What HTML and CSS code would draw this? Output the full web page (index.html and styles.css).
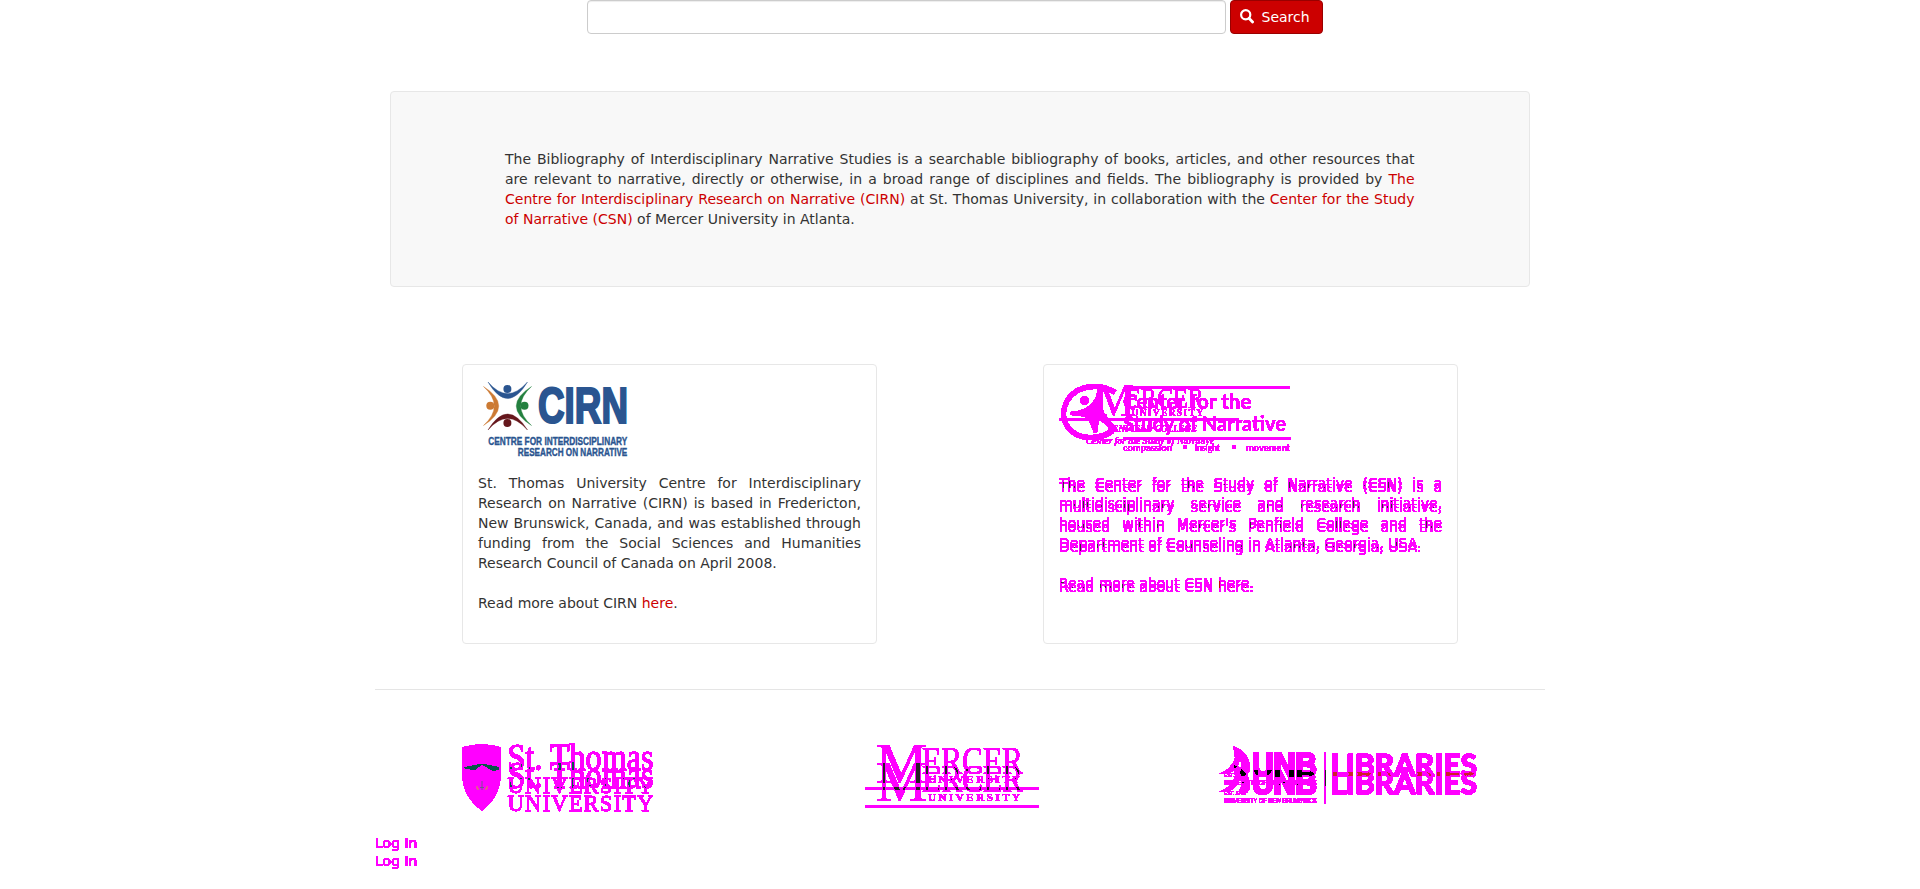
FILE: index.html
```html
<!DOCTYPE html>
<html lang="en">
<head>
<meta charset="utf-8">
<title>Bibliography of Interdisciplinary Narrative Studies</title>
<link rel="stylesheet" href="styles.css">
</head>
<body>
<svg class="defs" width="0" height="0" aria-hidden="true">
  <defs>
    <filter id="ghost4" x="-5%" y="-5%" width="110%" height="120%" color-interpolation-filters="sRGB">
      <feOffset in="SourceGraphic" dy="4" result="moved"/>
      <feComposite in="SourceGraphic" in2="moved" operator="xor"/>
      <feComponentTransfer result="mask"><feFuncA type="discrete" tableValues="0 1 1 1 1 1 1 1 1 1 1 1 1 1 1 1"/></feComponentTransfer>
      <feFlood flood-color="#ff00ff"/>
      <feComposite in2="mask" operator="in" result="paint"/>
      <feComposite in="SourceGraphic" in2="moved" operator="in" result="both"/>
      <feMerge><feMergeNode in="both"/><feMergeNode in="paint"/></feMerge>
    </filter>
    <filter id="ghost18" filterUnits="userSpaceOnUse" x="-5" y="-5" width="290" height="120" color-interpolation-filters="sRGB">
      <feOffset in="SourceGraphic" dy="18" result="moved"/>
      <feComposite in="SourceGraphic" in2="moved" operator="xor"/>
      <feComponentTransfer result="mask"><feFuncA type="discrete" tableValues="0 1 1 1 1 1 1 1 1 1 1 1 1 1 1 1"/></feComponentTransfer>
      <feFlood flood-color="#ff00ff"/>
      <feComposite in2="mask" operator="in" result="paint"/>
      <feComposite in="SourceGraphic" in2="moved" operator="in" result="both"/>
      <feMerge><feMergeNode in="both"/><feMergeNode in="paint"/></feMerge>
    </filter>
    <filter id="crisp" filterUnits="userSpaceOnUse" x="-5" y="-5" width="290" height="120" color-interpolation-filters="sRGB">
      <feComponentTransfer><feFuncA type="discrete" tableValues="0 1 1 1 1 1 1 1 1 1"/></feComponentTransfer>
    </filter>
  </defs>
</svg>
<div class="container">
  <form class="search">
    <input class="search-input" type="text" aria-label="Search">
    <button class="search-button" type="button">
      <svg width="14" height="15" viewBox="0 0 14 15"><circle cx="5.700" cy="5.800" r="4.600" fill="none" stroke="#fff" stroke-width="2.200"/><path d="M9 9.200l3.600 3.700" stroke="#fff" stroke-width="2.800" stroke-linecap="round"/></svg>
      <span>Search</span>
    </button>
  </form>
  <section class="intro">
    The Bibliography of Interdisciplinary Narrative Studies is a searchable bibliography of books, articles, and other resources that are relevant to narrative, directly or otherwise, in a broad range of disciplines and fields. The bibliography is provided by <a href="#">The Centre for Interdisciplinary Research on Narrative (CIRN)</a> at St. Thomas University, in collaboration with the <a href="#">Center for the Study of Narrative (CSN)</a> of Mercer University in Atlanta.
  </section>
  <div class="cards">
    <article class="card">
      <svg class="card-logo" width="160" height="80" viewBox="8 10 160 80">
        <path d="M18 12Q37.500 35 57.500 12Q37.500 45 18 12Z" fill="#2a5590" stroke="#2a5590" stroke-width=".4"/>
        <path d="M13.500 16.500Q35 36 13.500 55.500Q44 36 13.500 16.500Z" fill="#cc7a33" stroke="#cc7a33" stroke-width=".4"/>
        <path d="M61.500 16.500Q40 36 61.500 55.500Q31 36 61.500 16.500Z" fill="#24803f" stroke="#24803f" stroke-width=".4"/>
        <path d="M18 60Q37.500 37 57.500 60Q37.500 28 18 60Z" fill="#65171c" stroke="#65171c" stroke-width=".4"/>
        <circle cx="37.400" cy="19" r="4" fill="#2a5590"/><circle cx="20.300" cy="35.700" r="4" fill="#cc7a33"/>
        <circle cx="54.500" cy="35.700" r="4" fill="#24803f"/><circle cx="37.400" cy="53" r="4" fill="#65171c"/>
        <g class="sans" fill="#2a5590" stroke="#2a5590">
          <text x="68" y="52.800" font-size="50" stroke-width="2.200" textLength="90" lengthAdjust="spacingAndGlyphs">CIRN</text>
          <text x="18.300" y="74.500" font-size="11.500" stroke-width=".4" textLength="139" lengthAdjust="spacingAndGlyphs">CENTRE FOR INTERDISCIPLINARY</text>
          <text x="47.800" y="85.700" font-size="11.500" stroke-width=".4" textLength="109.500" lengthAdjust="spacingAndGlyphs">RESEARCH ON NARRATIVE</text>
        </g>
      </svg>
      <p>St. Thomas University Centre for Interdisciplinary Research on Narrative (CIRN) is based in Fredericton, New Brunswick, Canada, and was established through funding from the Social Sciences and Humanities Research Council of Canada on April 2008.</p>
      <p>Read more about CIRN <a href="#">here</a>.</p>
    </article>
    <article class="card">
      <svg class="card-logo" width="240" height="80" viewBox="9 5 240 80">
        <g filter="url(#crisp)" fill="#f0f">
          <path d="M65 17.500C51 8 27 9 17 26C6 48 24 66 46 62Q56 61 62 56" fill="none" stroke="#f0f" stroke-width="5"/>
          <circle cx="34.500" cy="25.500" r="4"/>
          <path d="M20 37Q39 36 46 22L48 12L53 18Q51 31 54 38L68 55L64 57L49 44L47 58H44L38 43Q30 40 20 40Z"/>
          <path d="M80 11H240V14H80ZM9 43.300H188.500V46H9ZM73 62H241V64.700H73Z"/>
          <g class="serif">
            <text x="46" y="41.300" font-size="46" textLength="38" lengthAdjust="spacingAndGlyphs">M</text>
            <text x="76" y="32.500" font-size="30" textLength="78" lengthAdjust="spacingAndGlyphs">ERCER</text>
            <text x="81.500" y="40.500" font-size="9.500" font-weight="700" textLength="71.500">UNIVERSITY</text>
            <text x="57" y="56.500" font-size="10" font-weight="700" font-style="italic" textLength="90" lengthAdjust="spacingAndGlyphs">PENFIELD COLLEGE</text>
            <text x="36" y="69" font-size="10.500" font-weight="700" font-style="italic" textLength="128" lengthAdjust="spacingAndGlyphs">Center for the Study of Narrative</text>
          </g>
          <g class="round">
            <text x="73" y="33.500" font-size="21" textLength="128.500" lengthAdjust="spacingAndGlyphs">Center for the</text>
            <text x="73" y="55.700" font-size="21" textLength="163" lengthAdjust="spacingAndGlyphs">Study of Narrative</text>
            <text x="73" y="75.500" font-size="9" textLength="49" lengthAdjust="spacingAndGlyphs">compassion</text>
            <text x="145" y="75.500" font-size="9" textLength="25" lengthAdjust="spacingAndGlyphs">insight</text>
            <text x="196" y="75.500" font-size="9" textLength="44" lengthAdjust="spacingAndGlyphs">movement</text>
          </g>
          <path d="M133 70h4v4h-4zM182 70h4v4h-4z"/>
        </g>
      </svg>
      <div class="ghosted">
        <p>The Center for the Study of Narrative (CSN) is a multidisciplinary service and research initiative, housed within Mercer's Penfield College and the Department of Counseling in Atlanta, Georgia, USA.</p>
        <p>Read more about CSN <a href="#">here</a>.</p>
      </div>
    </article>
  </div>
  <hr class="rule">
  <footer class="partners">
    <svg width="194" height="90" viewBox="0 0 194 90">
      <path d="M0 17Q20 11 39 17V46Q38 68 20 81Q1 68 0 46Z" fill="#f0f" shape-rendering="crispEdges"/>
      <path d="M2 37L17 34H23L37 37V40L31 41L20 35L13 40L3 39Z" fill="#075648" shape-rendering="crispEdges"/>
      <path d="M18 57.500h4M20 51v9" stroke="#56677a" stroke-width=".8"/><path d="M15 56v3h2M25 56v3h-2" stroke="#c9a13c" fill="none"/>
      <g filter="url(#ghost18)" class="serif" fill="#075648">
        <text x="45.500" y="39.500" font-size="37" stroke="#075648" stroke-width=".5" textLength="146" lengthAdjust="spacingAndGlyphs">St. Thomas</text>
        <text x="45.500" y="62.500" font-size="22.500" stroke="#075648" stroke-width=".3" textLength="146" lengthAdjust="spacing">UNIVERSITY</text>
      </g>
    </svg>
    <svg class="mercer" width="175" height="90" viewBox="0 0 175 90">
      <g filter="url(#ghost18)" class="serif" fill="#222">
        <text x="11" y="52.500" font-size="58" textLength="51" lengthAdjust="spacingAndGlyphs">M</text>
        <text x="57" y="43.500" font-size="39" textLength="101" lengthAdjust="spacingAndGlyphs">ERCER</text>
        <text x="63" y="53" font-size="11" font-weight="700" textLength="92">UNIVERSITY</text>
        <path d="M0 57H174V60H0Z"/>
      </g>
    </svg>
    <svg class="unb" width="260" height="90" viewBox="0 0 260 90">
      <g filter="url(#ghost18)">
        <path d="M14 16Q31 22 31 39Q30 45 23 47L20 43Q24 38 21 28Q20 38 11 43L0 44Q13 39 16 28Q16 22 14 16Z"/>
        <g class="sans">
          <text x="33" y="46" font-size="33" stroke="#000" stroke-width="1.800" textLength="65" lengthAdjust="spacingAndGlyphs">UNB</text>
          <text x="5" y="47" font-size="6" textLength="22" lengthAdjust="spacingAndGlyphs">EST. 1785</text>
          <text x="5" y="55" font-size="6.500" textLength="93" lengthAdjust="spacingAndGlyphs">UNIVERSITY OF NEW BRUNSWICK</text>
        </g>
        <path d="M105.500 22H107V56H105.500Z" fill="#222"/>
        <text class="round" x="111.500" y="46" font-size="31" fill="#ce2028" stroke="#ce2028" stroke-width="1" textLength="146.500" lengthAdjust="spacingAndGlyphs">LIBRARIES</text>
      </g>
    </svg>
  </footer>
  <svg class="login" width="60" height="50" viewBox="0 0 60 50">
    <g filter="url(#ghost18)"><text x="0" y="15" font-size="14" fill="#c00">Log In</text></g>
  </svg>
</div>
</body>
</html>
```
FILE: styles.css
```css
* { box-sizing: border-box; }

body {
  margin: 0;
  background: #fff;
  color: #333;
  font: 14px/20px "DejaVu Sans", Verdana, sans-serif;
}

a { color: #c00; text-decoration: none; }
svg { display: block; }
.defs { height: 0; }
.container { width: 1170px; margin: 0 auto; }

.search {
  display: flex;
  gap: 4px;
  height: 34px;
  padding-left: 212px;
}
.search-input {
  width: 639px;
  height: 34px;
  border: 1px solid #ccc;
  border-radius: 4px;
  box-shadow: inset 0 1px 1px rgba(0, 0, 0, .075);
}
.search-button {
  display: flex;
  align-items: center;
  gap: 7.5px;
  width: 93px;
  height: 34px;
  padding: 0 9px;
  border: 1px solid #900;
  border-radius: 4px;
  background: #c00;
  color: #fff;
  font: inherit;
}
.search-button svg { flex: none; margin-top: -2px; }

.intro {
  margin: 57px 15px 0;
  height: 196px;
  padding: 57px 114.5px 57px 114px;
  border: 1px solid #e7e7e7;
  border-radius: 4px;
  background: #f8f8f8;
  text-align: justify;
}

.cards {
  display: flex;
  justify-content: space-between;
  margin: 77px 87px 0;
}
.card {
  width: 415px;
  height: 280px;
  padding: 15px;
  border: 1px solid #e7e7e7;
  border-radius: 4px;
  text-align: justify;
}
.card-logo { margin-bottom: 13px; }
.card p { margin: 0 0 20px; }
.ghosted { filter: url(#ghost4); }

.rule {
  margin: 45px 0 0;
  border: 0;
  border-top: 1px solid #e5e5e5;
}
.partners { display: flex; padding: 40px 0 0 87px; }
.mercer { margin-left: 209px; }
.unb { margin-left: 179px; }
.login { margin-top: 13px; }

.serif { font-family: "Liberation Serif", serif; }
.sans { font-family: "Liberation Sans", sans-serif; font-weight: 700; }
.round { font-family: Lato, sans-serif; font-weight: 700; }
```
